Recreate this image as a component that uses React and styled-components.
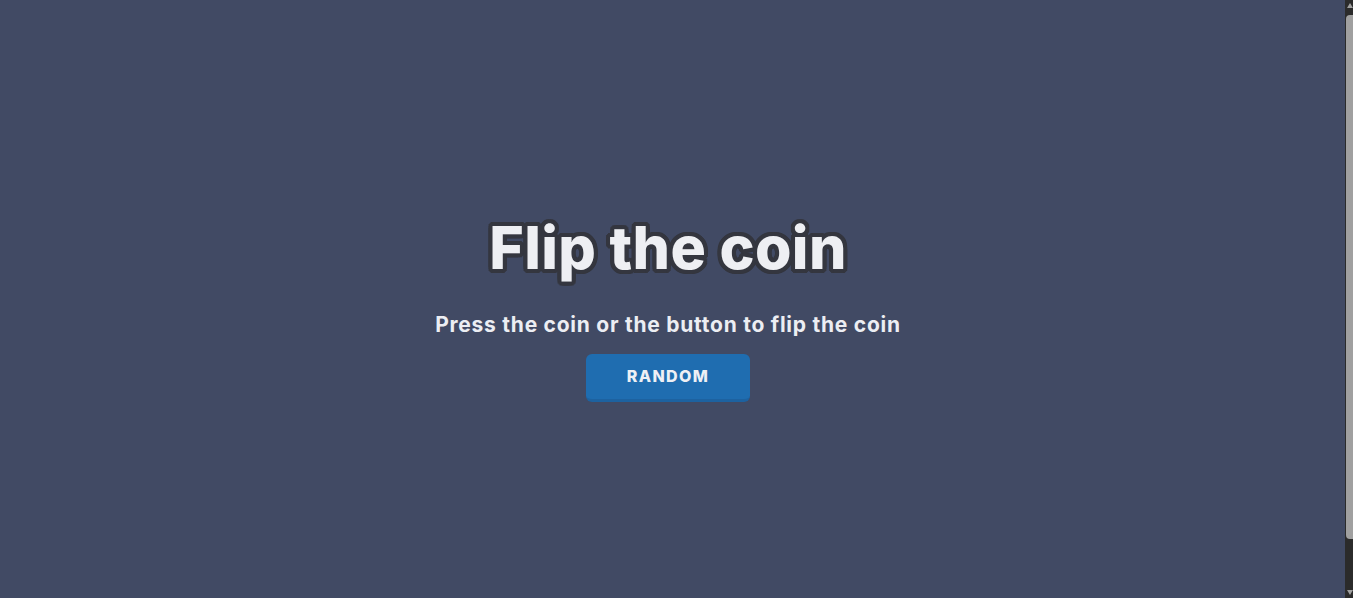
import styled, { createGlobalStyle } from "styled-components";

const GlobalStyle = createGlobalStyle`
  html, body {
    margin: 0;
    padding: 0;
    background-color: #414a64;
    overflow: hidden;
  }
  body {
    font-family: "Inter", "Noto Sans", sans-serif;
  }
`;

const StyledPage = styled.main`
  height: 100vh;
  display: flex;
  flex-direction: column;
  align-items: center;
  justify-content: center;
  padding: 17px 17px 0 0;
  box-sizing: border-box;
  color: #eceef3;
`;

const Title = styled.h1`
  margin: 0;
  font-size: 59px;
  font-weight: 800;
  letter-spacing: 0.35px;
  color: #eeeff3;
  line-height: 1.2;
  text-shadow:
    4px 0 0 #34363f, -4px 0 0 #34363f, 0 4px 0 #34363f, 0 -4px 0 #34363f,
    3px 3px 0 #34363f, -3px 3px 0 #34363f, 3px -3px 0 #34363f, -3px -3px 0 #34363f,
    4px 2px 0 #34363f, -4px 2px 0 #34363f, 4px -2px 0 #34363f, -4px -2px 0 #34363f,
    2px 4px 0 #34363f, -2px 4px 0 #34363f, 2px -4px 0 #34363f, -2px -4px 0 #34363f;
`;

const Subtitle = styled.p`
  margin: 28px 0 17px;
  font-size: 21px;
  font-weight: 700;
  letter-spacing: 0.75px;
  color: #eceef3;
`;

const RandomButton = styled.button`
  width: 164px;
  height: 48px;
  border: none;
  border-bottom: 3px solid #1d62a0;
  border-radius: 6px;
  background-color: #1f6db0;
  color: #eef0f5;
  font-family: inherit;
  font-size: 16px;
  font-weight: 800;
  letter-spacing: 1.4px;
  cursor: pointer;
`;

// window scrollbar as it appears in the capture
const ScrollTrack = styled.div`
  position: fixed;
  top: 0;
  right: 0;
  bottom: 0;
  width: 8px;
  background: #2b2b2b;
  display: flex;
  flex-direction: column;
  align-items: flex-end;
  padding: 3px 0;
  box-sizing: border-box;
`;

const ScrollArrow = styled.div`
  width: 0;
  height: 0;
  border-left: 3px solid transparent;
  border-right: 3px solid transparent;
  ${({ $down }) =>
    $down
      ? "border-top: 5px solid #a0a0a0; margin-top: auto;"
      : "border-bottom: 5px solid #a0a0a0;"}
`;

const ScrollThumb = styled.div`
  width: 7px;
  height: 524px;
  margin-top: 7px;
  background: #a0a0a0;
  border-radius: 4px 0 0 4px;
`;

export default function App() {
  return (
    <>
      <GlobalStyle />
      <StyledPage>
        <Title>Flip the coin</Title>
        <Subtitle>Press the coin or the button to flip the coin</Subtitle>
        <RandomButton>RANDOM</RandomButton>
      </StyledPage>
      <ScrollTrack>
        <ScrollArrow />
        <ScrollThumb />
        <ScrollArrow $down />
      </ScrollTrack>
    </>
  );
}
